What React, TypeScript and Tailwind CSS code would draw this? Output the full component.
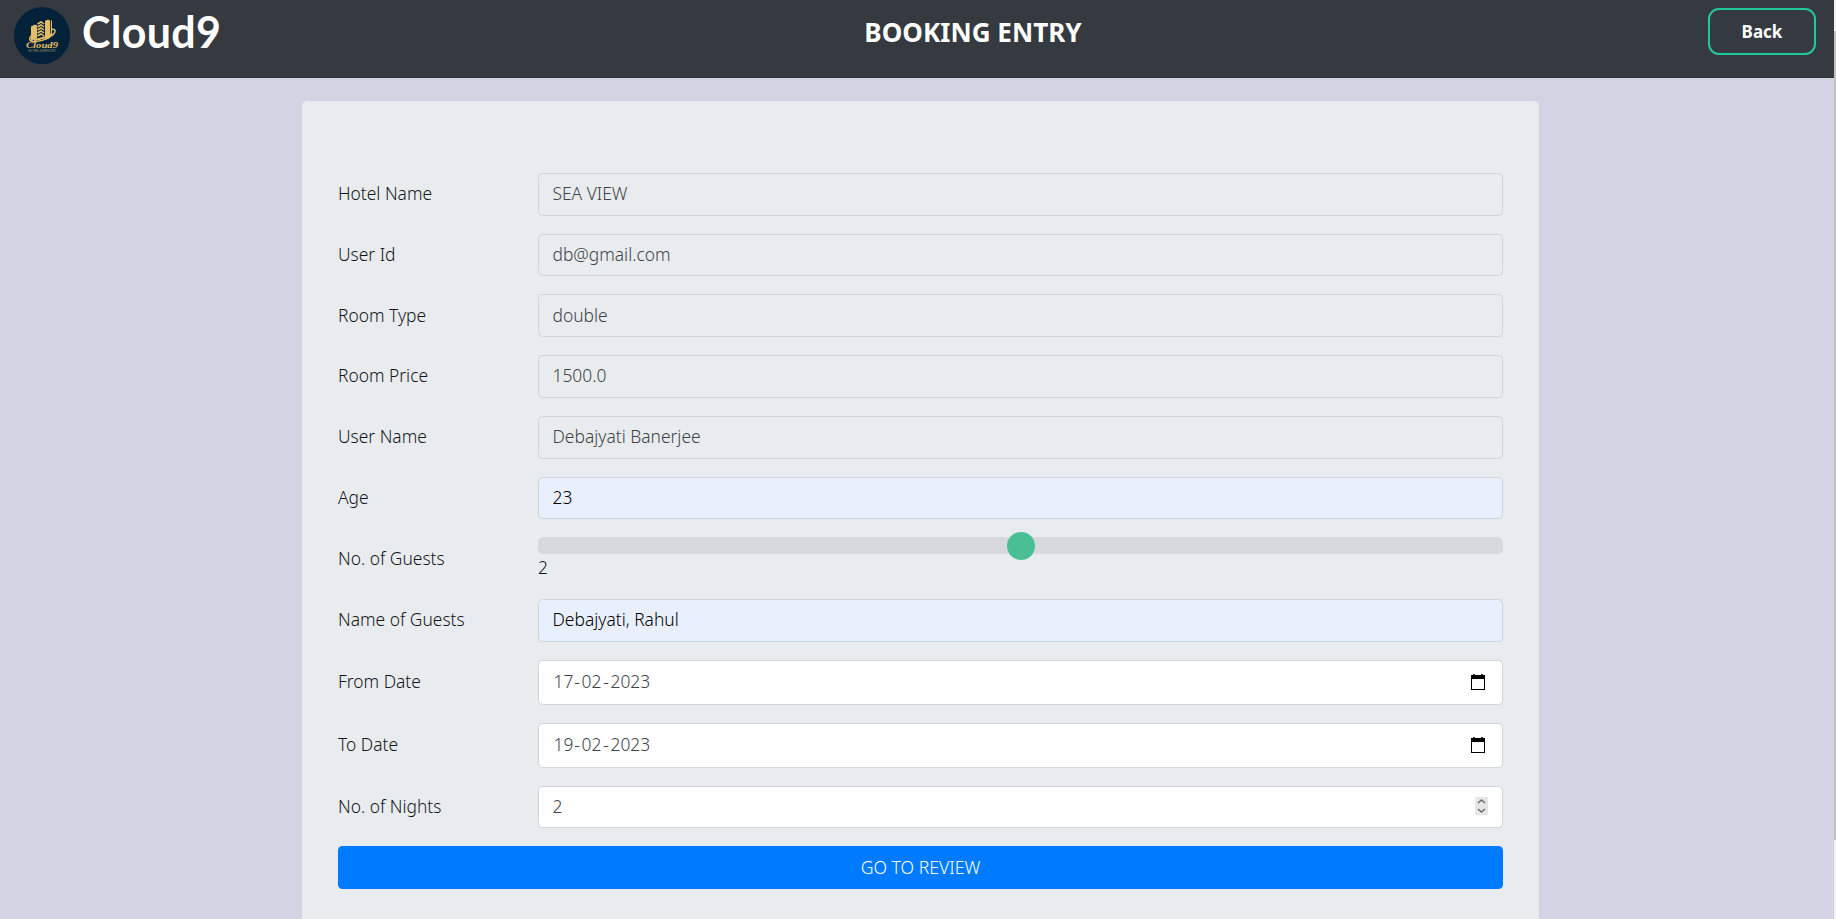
import React from "react";

type Tone = "readonly" | "autofill" | "plain";

const tones: Record<Tone, string> = {
  readonly: "bg-[#e8ecee] text-[#3d4349]",
  autofill: "bg-[#e8f0fe] text-black",
  plain: "bg-white text-[#3d4349]",
};

function Row({ label, height = "h-[42.75px]", children }: { label: string; height?: string; children: React.ReactNode }) {
  return (
    <div className={`flex ${height}`}>
      <div className="flex w-[200px] shrink-0 items-center pb-px text-[#14171a]">{label}</div>
      <div className="min-w-0 flex-1">{children}</div>
    </div>
  );
}

function Field({ tone, children }: { tone: Tone; children: React.ReactNode }) {
  return (
    <div className={`flex h-full items-center justify-between rounded-[4.5px] border border-[#ced4da] pb-px pl-[13.5px] pr-[14px] ${tones[tone]}`}>
      {children}
    </div>
  );
}

function DateText({ d, m, y }: { d: string; m: string; y: string }) {
  return (
    <span className="flex pl-px">
      <span className="w-[19px]">{d}</span>
      <span className="w-[9px] text-center">-</span>
      <span className="w-[20px]">{m}</span>
      <span className="w-[9px] text-center">-</span>
      <span>{y}</span>
    </span>
  );
}

function CalendarIcon() {
  return (
    <svg className="mr-[2px]" width="16" height="18" viewBox="0 0 16 18" shapeRendering="crispEdges">
      <path d="M3 1h2v2H3zM11 1h2v2h-2z" fill="#333" />
      <path d="M1 2h14v4H1z" fill="#000" />
      <path d="M1.5 5v11.5h13V5" fill="none" stroke="#000" />
    </svg>
  );
}

function Logo() {
  return (
    <svg width="56" height="58" viewBox="0 0 56 58">
      <ellipse cx="28" cy="28.700" rx="28" ry="28.500" fill="#03223a" />
      <g fill="#e5bd69">
        <path d="M17 19.500l4-2 2 1V31l-6 3z" />
        <path d="M31 14l3-1.500 2 1V31l-5 2z" />
        <path d="M33 14l3 0v16l-3 2z" />
        <path d="M36.800 18.500L37 13l1 1v14l-1.200 1z" />
      </g>
      <g fill="none" stroke="#e5bd69" strokeWidth="1.500">
        <path d="M23.500 17l3.500-2 3 2M23.500 20l3.500-2 3 2M23.500 23l3.500-2 3 2M23.500 26l3.500-2 3 2M23.500 29l3.500-2 3 2" />
        <path d="M18 28c-4 4-3 7 4 6.500 8-.5 18-6 19-10 .4-1.800-1-2.500-3-2" />
        <path d="M20 33c7-1 13-3 17-6" strokeWidth="2" />
      </g>
      <text x="12" y="40.500" textLength="32" lengthAdjust="spacingAndGlyphs" fill="#e5bd69" className="font-['Liberation_Serif',serif] text-[8.5px] font-bold italic">Cloud9</text>
      <text x="14" y="45" textLength="28" fill="#8d8357" className="font-['Liberation_Sans',sans-serif] text-[4px]">HOTEL &amp; RESORT</text>
    </svg>
  );
}

export default function App() {
  return (
    <div className="flex h-[919px] w-full overflow-hidden bg-[#d4d3e4] font-['Noto_Sans','Open_Sans',sans-serif] text-[17.4px] font-[350] leading-[27px]">
      <div className="flex min-w-0 flex-1 flex-col">
        <header className="grid h-[78px] shrink-0 grid-cols-[1fr_auto_1fr] items-start border-b border-[#2e3338] bg-[#343a40] text-white">
          <div className="flex items-start pl-[14px] pt-[7px]">
            <Logo />
            <span className="ml-[12px] font-['Lato',sans-serif] text-[43px] font-bold leading-[50px] tracking-[0.3px]">Cloud9</span>
          </div>
          <h1 className="ml-[112px] pt-[15px] text-[26.1px] font-bold leading-[34px]">BOOKING ENTRY</h1>
          <button className="mr-[18px] mt-2 h-[47px] w-[108px] justify-self-end rounded-[11px] border-2 border-[#20c997] text-[17px] font-bold">Back</button>
        </header>
        <main className="ml-[302px] mt-[23px] h-[900px] w-[1237px] shrink-0 rounded-[5px] bg-[#e8ecee] px-9 pt-[71.8px]">
          <form className="flex flex-col gap-[18px]">
            <Row label="Hotel Name"><Field tone="readonly">SEA VIEW</Field></Row>
            <Row label="User Id"><Field tone="readonly">db@gmail.com</Field></Row>
            <Row label="Room Type"><Field tone="readonly">double</Field></Row>
            <Row label="Room Price"><Field tone="readonly">1500.0</Field></Row>
            <Row label="User Name"><Field tone="readonly">Debajyati Banerjee</Field></Row>
            <Row label="Age"><Field tone="autofill">23</Field></Row>
            <Row label="No. of Guests" height="h-[43.6px]">
              <div className="flex h-[17px] items-center justify-center rounded-[5.5px] bg-[#d8d9db]">
                <div className="-my-2 h-7 w-7 rounded-full bg-[#4abf96]" />
              </div>
              <div className="text-[#14171a]">2</div>
            </Row>
            <Row label="Name of Guests"><Field tone="autofill">Debajyati, Rahul</Field></Row>
            <Row label="From Date" height="h-[45px]">
              <Field tone="plain"><DateText d="17" m="02" y="2023" /><CalendarIcon /></Field>
            </Row>
            <Row label="To Date" height="h-[45px]">
              <Field tone="plain"><DateText d="19" m="02" y="2023" /><CalendarIcon /></Field>
            </Row>
            <Row label="No. of Nights">
              <Field tone="plain">
                2
                <svg className="mb-px" width="13" height="18" viewBox="0 0 13 18">
                  <path d="M0 0h13v18H0z" fill="#e6e6e6" />
                  <path d="M3 6l3.500-3L10 6M3 12l3.500 3L10 12" fill="none" stroke="#6b6b6b" strokeWidth="1.500" />
                </svg>
              </Field>
            </Row>
            <button type="button" className="h-[42.75px] rounded-[4.5px] bg-[#007bff] pb-px text-[17.6px] text-white">GO TO REVIEW</button>
          </form>
        </main>
      </div>
      <div className="w-[2px] shrink-0 bg-[#f1f1f1] pt-[31px]">
        <div className="h-[809px] bg-[#c1c1c1]" />
      </div>
    </div>
  );
}
